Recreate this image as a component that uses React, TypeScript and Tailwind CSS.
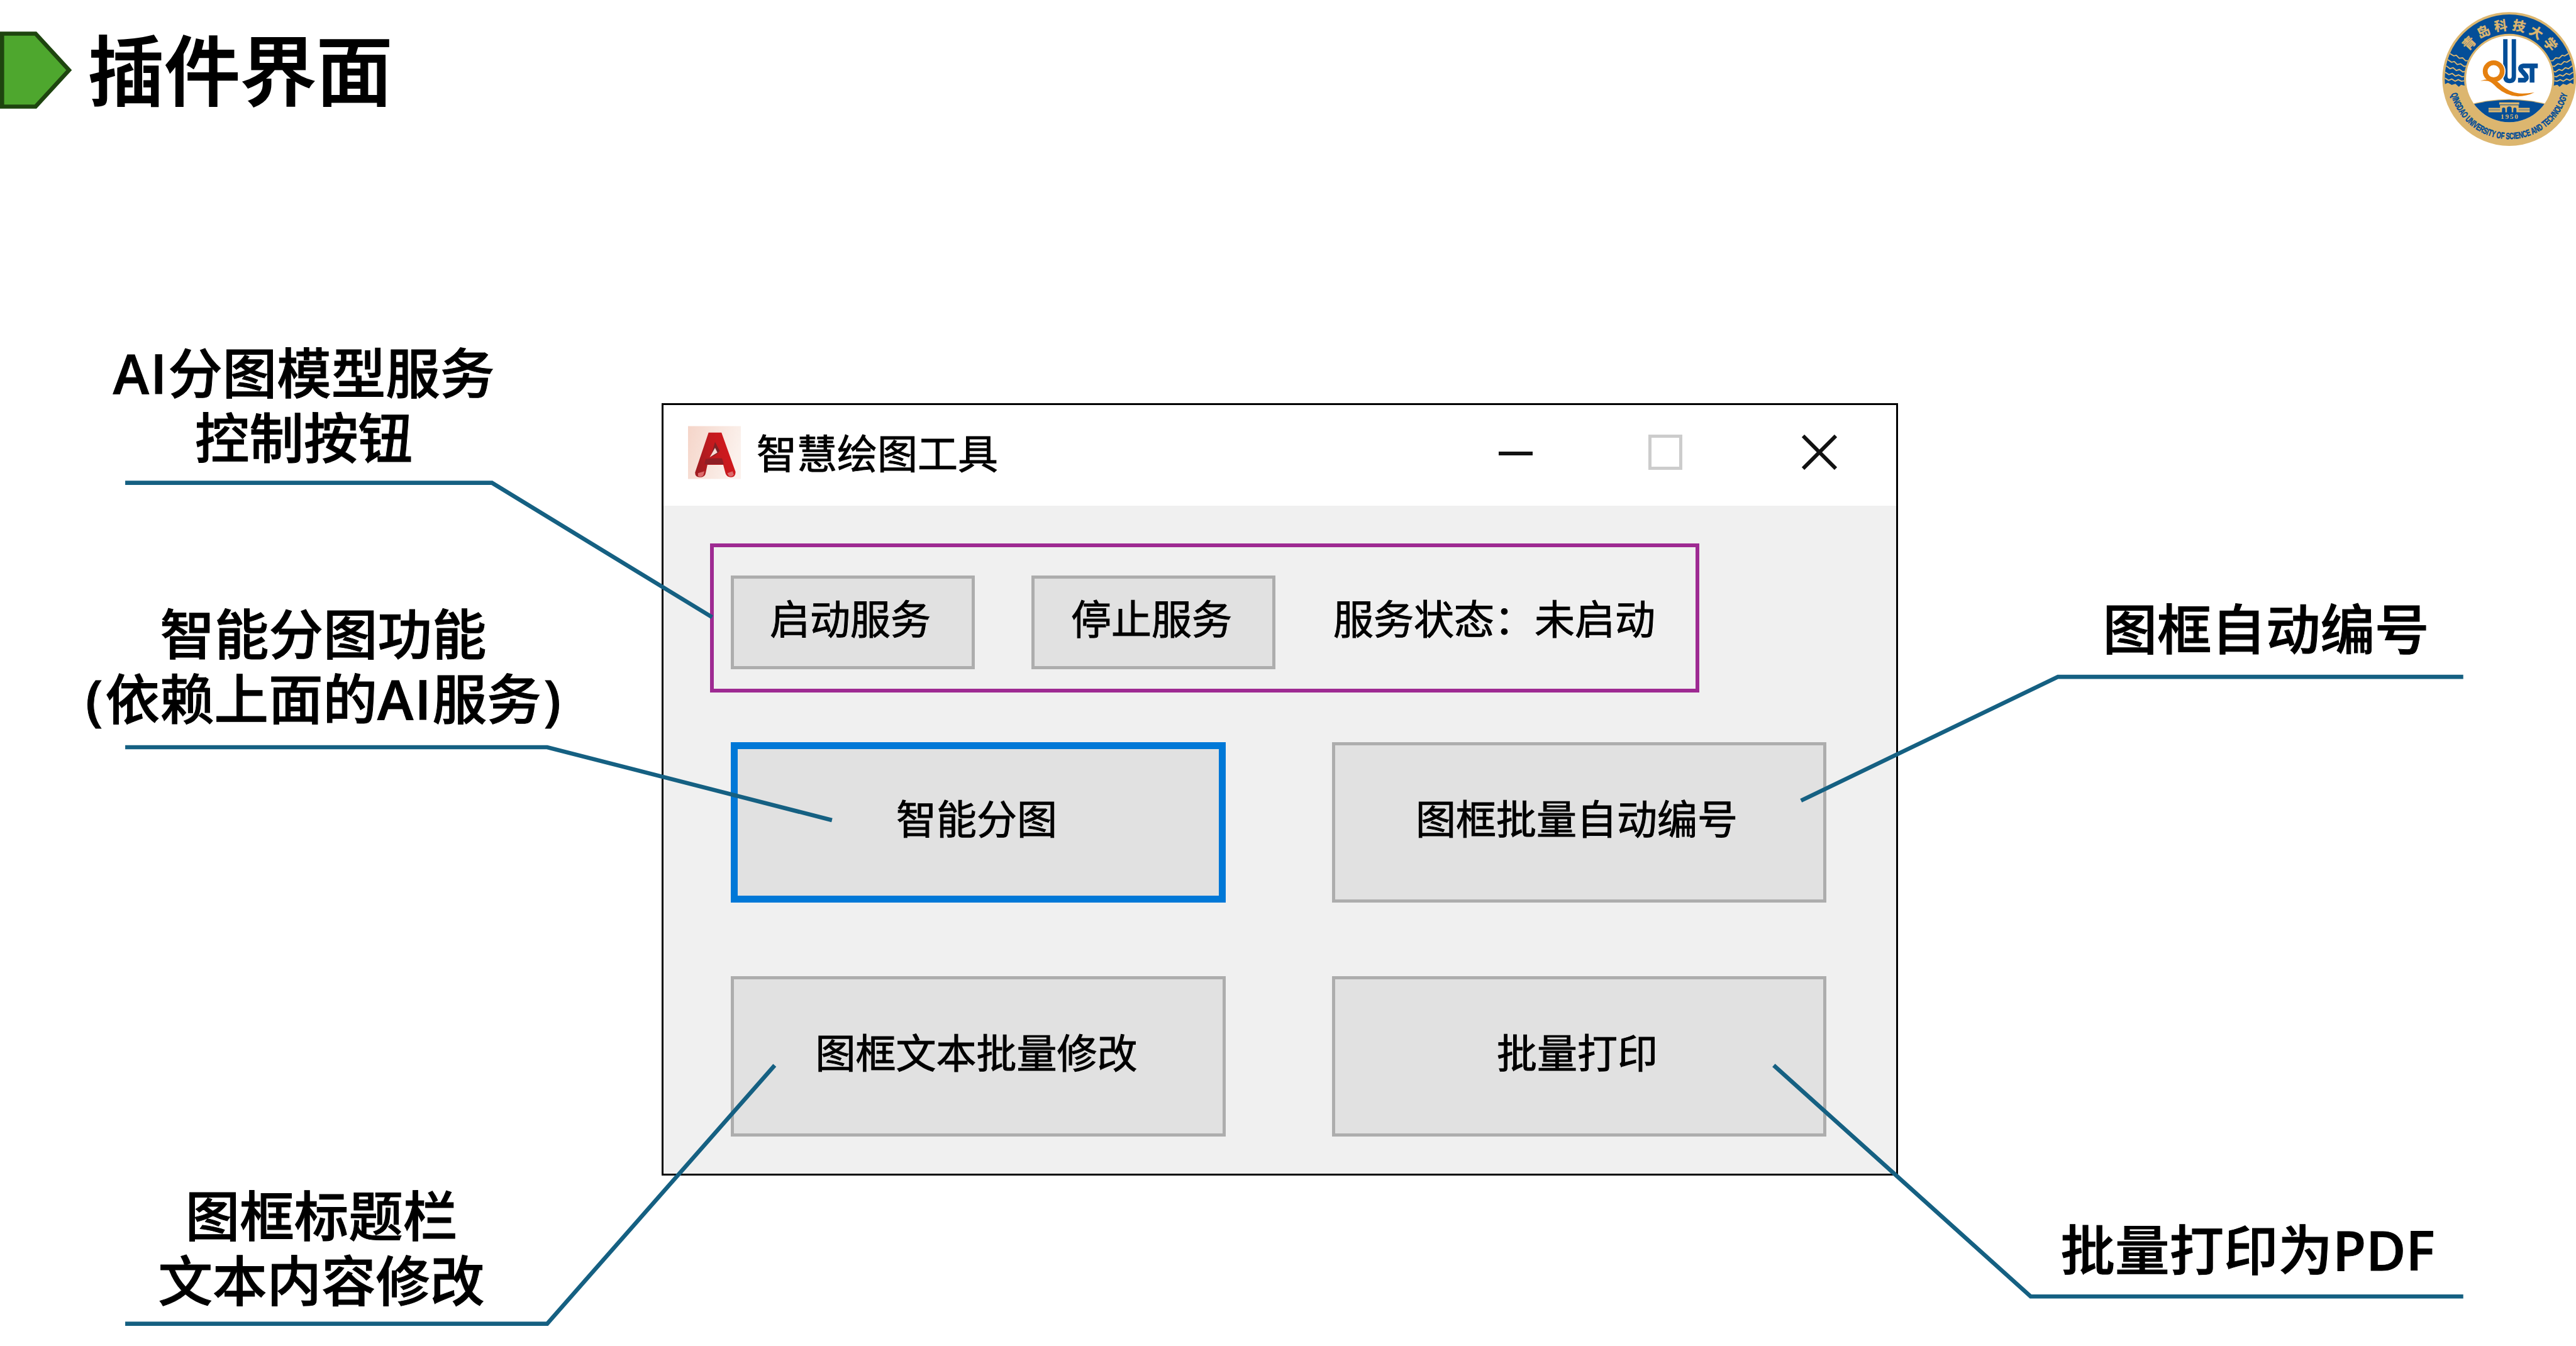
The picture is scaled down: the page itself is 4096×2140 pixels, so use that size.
import type { ReactNode } from "react";

const uiFont = "font-['Open_Sans','Noto_Sans_CJK_SC',sans-serif]";

function PageHeader() {
  return (
    <header className="flex h-[240px] items-start">
      <svg className="mt-[50px] h-[123px] w-[115px] shrink-0" viewBox="0 0 122 130">
        <path d="M3.5 3.5H60L116.5 65L60 126.5H3.5Z" fill="#4ea72e" stroke="#1e450f" strokeWidth="7" />
      </svg>
      <h1 className="ml-[25px] mt-[41px] whitespace-nowrap text-[121px] font-medium leading-[140px] [-webkit-text-stroke:2px_black]">
        插件界面
      </h1>
      <SchoolSeal />
    </header>
  );
}

function SealWaves() {
  return (
    <g fill="none" stroke="#dcb66f" strokeWidth="6" strokeLinejoin="round" clipPath="url(#sealBand)">
      <path d="M90 250L114 271L132 282L145 279L160 294L177 292L192 307L212 307" />
      <path d="M84 296L104 303L121 314L135 311L150 326L167 322L184 335L204 333" />
      <path d="M80 330L98 335L113 347L129 342L145 356L161 351L178 363L198 359" />
      <path d="M76 360L93 367L108 377L124 371L141 384L157 378L174 388L196 384" />
      <path d="M72 390L90 396L106 406L122 399L139 410L155 402L171 410L196 406" />
    </g>
  );
}

function SchoolSeal() {
  return (
    <svg className="ml-auto h-[255px] w-[236px] shrink-0" viewBox="0 0 750 810">
      <defs>
        <clipPath id="sealBand">
          <path clipRule="evenodd" d="M86.500 399a326 326 0 1 0 652 0a326 326 0 1 0 -652 0ZM184.500 399a228 228 0 1 0 456 0a228 228 0 1 0 -456 0Z" />
        </clipPath>
        <clipPath id="sealCore">
          <circle cx="412.500" cy="399" r="218" />
        </clipPath>
        <path id="sealTop" d="M164.500 399A248 248 0 0 1 660.500 399" />
        <path id="sealBottom" d="M108.500 399A304 304 0 0 0 716.500 399" />
      </defs>
      <circle cx="412.500" cy="399" r="338" fill="#dcb66f" />
      <path
        clipPath="url(#sealBand)"
        d="M60 50H765V424L735 424L722 418L703 429L684 423L667 438L656 428L630 434H195L169 428L158 438L141 423L122 429L103 418L90 424H60Z"
        fill="#044e98"
      />
      <SealWaves />
      <g transform="translate(825 0) scale(-1 1)">
        <SealWaves />
      </g>
      <circle cx="412.500" cy="399" r="218" fill="#fff" />
      <g clipPath="url(#sealCore)">
        <path d="M190 533Q412 467 635 533V640H190Z" fill="#dcb66f" />
        <path d="M190 538Q412 470 635 538V640H190Z" fill="#044e98" />
      </g>
      <path
        fill="#dcb66f"
        d="M362 517H463V528H362ZM366 531H460V545H516V554H460V557H516V567H449V552Q449 543 441 543Q433 543 433 552V567H425V550Q425 538 413 538Q401 538 401 550V567H393V552Q393 543 384 543Q376 543 376 552V567H308V557H366V554H308V545H366Z"
      />
      <text x="413" y="601" textAnchor="middle" textLength="88" fill="#dcb66f" className="font-['Liberation_Serif',serif] text-[36px] font-bold">
        1950
      </text>
      <path d="M393 198V385Q393 409 414.500 409Q436 409 436 385V198" fill="none" stroke="#044e98" strokeWidth="22" />
      <circle cx="334" cy="360" r="60" fill="#fff" />
      <circle cx="334" cy="360" r="43" fill="#fff" stroke="#e5800f" strokeWidth="24" />
      <path d="M266 409Q296 396 334 402Q352 408 372 430Q412 466 462 472Q500 474 540 467Q500 486 456 487Q398 484 352 444Q322 412 305 409Q286 405 266 409Z" fill="#e5800f" />
      <path d="M557 332.500H484Q468 334 470 349Q472 356 480 362L496 381Q506 396 490 405H457" fill="none" stroke="#044e98" strokeWidth="24" />
      <path d="M528 326V417" stroke="#044e98" strokeWidth="24" />
      <text
        fill="#dcb66f"
        stroke="#dcb66f"
        strokeWidth="1.500"
        className="font-['Noto_Sans_CJK_SC',sans-serif] text-[65px] font-bold tracking-[20px]"
      >
        <textPath href="#sealTop" startOffset="147">
          青岛科技大学
        </textPath>
      </text>
      <text
        fill="#044e98"
        stroke="#044e98"
        strokeWidth="2"
        className="font-['Liberation_Sans_Narrow','Liberation_Sans',sans-serif] text-[46px] font-bold"
      >
        <textPath href="#sealBottom" startOffset="76" textLength="802" lengthAdjust="spacingAndGlyphs">
          QINGDAO UNIVERSITY OF SCIENCE AND TECHNOLOGY
        </textPath>
      </text>
    </svg>
  );
}

function CadIcon() {
  return (
    <svg className="h-[85px] w-[84px] shrink-0" viewBox="0 0 90 90">
      <defs>
        <linearGradient id="cadBg" x1="0" y1="0" x2="1" y2="0.3">
          <stop offset="0" stopColor="#f5d5c9" />
          <stop offset="1" stopColor="#fbf1ec" />
        </linearGradient>
        <linearGradient id="cadRed" x1="0" y1="0.600" x2="1" y2="0.300">
          <stop offset="0" stopColor="#a01c20" />
          <stop offset="0.500" stopColor="#c41a1e" />
          <stop offset="1" stopColor="#d4181c" />
        </linearGradient>
      </defs>
      <rect width="90" height="90" fill="url(#cadBg)" />
      <path d="M35 11H57L81 78Q81 87 73 87Q66 87 64 81L60 66H33L30 80Q29 87 20 87Q12 87 12 79Z" fill="url(#cadRed)" />
      <path d="M46 27L54 42Q48 50 39 52Z" fill="#7d2226" />
      <path d="M46 37L50 45L37 53Z" fill="#f6dcd6" />
      <path d="M30 56Q46 54 58 55L61 65H28Z" fill="#8f1f25" />
      <path d="M17 80L28 77L26 84Q22 88 17 85ZM67 80L76 77L78 83Q73 88 69 84Z" fill="#dd6b6b" />
    </svg>
  );
}

function WindowControls() {
  return (
    <div className="ml-auto flex items-center pr-[94px]">
      <svg className="mt-[4px] h-[54px] w-[54px]" viewBox="0 0 54 54">
        <path d="M0 27H54" stroke="#111" strokeWidth="6" />
      </svg>
      <svg className="ml-[184px] h-[56px] w-[54px]" viewBox="0 0 54 56">
        <rect x="2.500" y="2.500" width="49" height="51" fill="none" stroke="#cccccc" strokeWidth="5" />
      </svg>
      <svg className="ml-[190px] h-[56px] w-[56px]" viewBox="0 0 56 56">
        <path d="M2 2L54 54M54 2L2 54" stroke="#111" strokeWidth="6" />
      </svg>
    </div>
  );
}

function ToolButton({ children, className }: { children: ReactNode; className: string }) {
  return (
    <button className={`flex items-center justify-center whitespace-nowrap bg-[#e1e1e1] pb-[11px] leading-[80px] ${className}`}>
      {children}
    </button>
  );
}

function ToolWindow() {
  return (
    <section className="absolute left-[1052px] top-[641px] flex h-[1228px] w-[1966px] flex-col border-[3px] border-black bg-[#f0f0f0] text-[64px] [-webkit-text-stroke:1px_black]">
      <div className="flex h-[160px] items-center bg-white pb-[10px] pl-[39px]">
        <CadIcon />
        <span className="ml-[25px] mt-[3px] whitespace-nowrap leading-[80px]">智慧绘图工具</span>
        <WindowControls />
      </div>
      <div className="ml-[74px] mt-[60px] flex h-[237px] w-[1573px] items-start border-[6px] border-[#9e2a92] pl-[27px] pt-[45px]">
        <ToolButton className="h-[149px] w-[388px] border-[5px] border-[#adadad] pr-[8px]">启动服务</ToolButton>
        <ToolButton className="ml-[90px] h-[149px] w-[388px] border-[5px] border-[#adadad] pr-[6px]">停止服务</ToolButton>
        <span className="ml-[92px] mt-[29px] whitespace-nowrap leading-[80px]">服务状态：未启动</span>
      </div>
      <div className="ml-[107px] mt-[79px] grid grid-cols-[787px_786px] grid-rows-[255px_255px] gap-x-[169px] gap-y-[117px]">
        <ToolButton className="border-[11px] border-[#0078d7] pr-[5px]">智能分图</ToolButton>
        <ToolButton className="border-[5px] border-[#adadad] pr-[8px]">图框批量自动编号</ToolButton>
        <ToolButton className="border-[5px] border-[#adadad] pr-[6px]">图框文本批量修改</ToolButton>
        <ToolButton className="border-[5px] border-[#adadad] pr-[6px]">批量打印</ToolButton>
      </div>
    </section>
  );
}

function Callout({ className, children }: { className: string; children: ReactNode }) {
  return (
    <div
      className={`absolute w-[800px] whitespace-nowrap text-center text-[86.5px] font-medium leading-[103px] [-webkit-text-stroke:1px_black] ${className}`}
    >
      {children}
    </div>
  );
}

function Latin({ children, className = "" }: { children: string; className?: string }) {
  return <span className={`font-semibold ${className}`}>{children}</span>;
}

function LeaderLines() {
  return (
    <svg className="pointer-events-none absolute left-0 top-0 h-[2140px] w-[4096px]" viewBox="0 0 4341 2268">
      <g fill="none" stroke="#156082" strokeWidth="7">
        <path d="M211 813.500H829L1200 1040" />
        <path d="M211 1259H922L1402 1382" />
        <path d="M211 2230.500H922L1305.500 1795" />
        <path d="M4151 1140.500H3468L3035 1349" />
        <path d="M4151 2184.500H3422L2989 1795" />
      </g>
    </svg>
  );
}

export default function App() {
  return (
    <main className={`relative h-[2140px] w-[4096px] overflow-hidden bg-white text-black ${uiFont}`}>
      <PageHeader />
      <ToolWindow />
      <Callout className="left-[83px] top-[541px]">
        <p>
          <Latin className="tracking-[2px]">AI</Latin>分图模型服务
        </p>
        <p>控制按钮</p>
      </Callout>
      <Callout className="left-[114px] top-[956px]">
        <p>智能分图功能</p>
        <p>
          <Latin className="mr-[4px]">(</Latin>依赖上面的<Latin className="tracking-[2px]">AI</Latin>服务
          <Latin className="ml-[4px]">)</Latin>
        </p>
      </Callout>
      <Callout className="left-[111px] top-[1881px]">
        <p>图框标题栏</p>
        <p>文本内容修改</p>
      </Callout>
      <Callout className="left-[3203px] top-[948px]">
        <p>图框自动编号</p>
      </Callout>
      <Callout className="left-[3174px] top-[1935px]">
        <p>
          批量打印为<Latin>PDF</Latin>
        </p>
      </Callout>
      <LeaderLines />
    </main>
  );
}
